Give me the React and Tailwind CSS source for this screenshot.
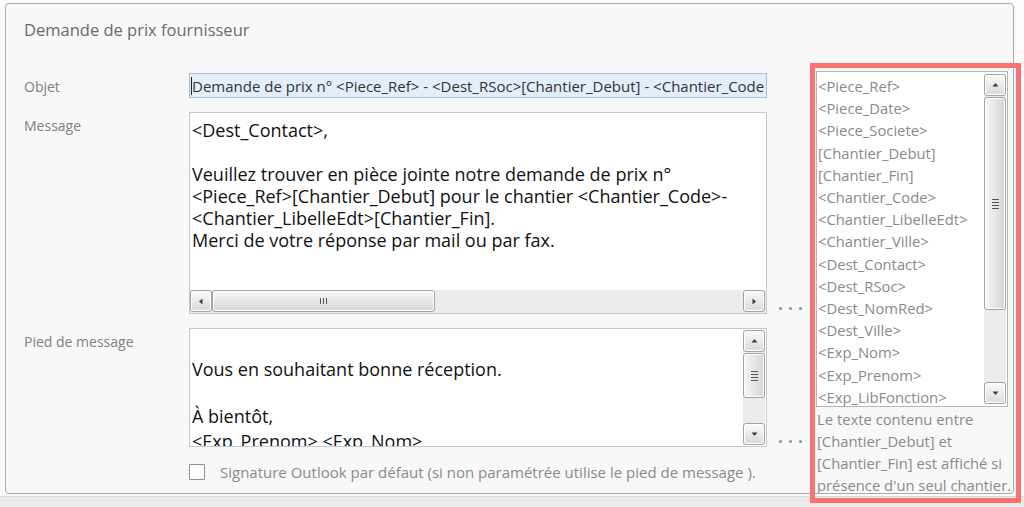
import React from "react";

const FONT = { fontFamily: '"Open Sans", "Noto Sans", sans-serif' };

const items = [
  "<Piece_Ref>",
  "<Piece_Date>",
  "<Piece_Societe>",
  "[Chantier_Debut]",
  "[Chantier_Fin]",
  "<Chantier_Code>",
  "<Chantier_LibelleEdt>",
  "<Chantier_Ville>",
  "<Dest_Contact>",
  "<Dest_RSoc>",
  "<Dest_NomRed>",
  "<Dest_Ville>",
  "<Exp_Nom>",
  "<Exp_Prenom>",
  "<Exp_LibFonction>",
];

function Arrow({ dir }) {
  const paths = {
    up: "M0.5 4.5 L3.5 1 L6.5 4.5 Z",
    down: "M0.5 1.5 L3.5 5 L6.5 1.5 Z",
    left: "M4.5 0.5 L1 3.5 L4.5 6.5 Z",
    right: "M1.5 0.5 L5 3.5 L1.5 6.5 Z",
  };
  return (
    <svg width="7" height="7" viewBox="0 0 7 7">
      <path d={paths[dir]} fill="#3c3c3c" />
    </svg>
  );
}

function Btn({ dir }) {
  return (
    <div className="w-[22px] h-[22px] shrink-0 rounded-[3px] border border-[#a3a3a3] bg-gradient-to-b from-[#fbfbfb] to-[#dadada] flex items-center justify-center shadow-[inset_0_0_0_1px_#ffffff]">
      <Arrow dir={dir} />
    </div>
  );
}

function VGrip() {
  return (
    <div className="flex flex-col gap-[2px]">
      <div className="w-[7px] h-[1px] bg-[#555]" />
      <div className="w-[7px] h-[1px] bg-[#555]" />
      <div className="w-[7px] h-[1px] bg-[#555]" />
      <div className="w-[7px] h-[1px] bg-[#555]" />
    </div>
  );
}

function HGrip() {
  return (
    <div className="flex flex-row gap-[2px]">
      <div className="w-[1px] h-[6px] bg-[#555]" />
      <div className="w-[1px] h-[6px] bg-[#555]" />
      <div className="w-[1px] h-[6px] bg-[#555]" />
    </div>
  );
}

function VScroll({ thumbTop, thumbH }) {
  return (
    <div className="w-[22px] h-full flex flex-col bg-[#ececec]">
      <Btn dir="up" />
      <div className="flex-1 flex flex-col" style={{ paddingTop: thumbTop }}>
        <div
          className="w-[22px] rounded-[3px] border border-[#a3a3a3] bg-gradient-to-r from-[#f7f7f7] to-[#d6d6d6] flex items-center justify-center shadow-[inset_0_0_0_1px_#ffffff]"
          style={{ height: thumbH }}
        >
          <VGrip />
        </div>
      </div>
      <Btn dir="down" />
    </div>
  );
}

function Dots() {
  return (
    <div className="flex gap-[7px] ml-[12px] mb-[4px]">
      <div className="w-[3px] h-[3px] rounded-full bg-[#8793a6]" />
      <div className="w-[3px] h-[3px] rounded-full bg-[#8793a6]" />
      <div className="w-[3px] h-[3px] rounded-full bg-[#8793a6]" />
    </div>
  );
}

export default function App() {
  return (
    <div
      className="relative w-[1024px] h-[507px] bg-[#fbfbfb] overflow-hidden"
      style={FONT}
    >
      <div className="ml-[5px] mt-[3px] w-[1009px] h-[491px] border border-[#a9a9a9] rounded-[4px] bg-[#f8f8f8] flex overflow-hidden">
        {/* Left column */}
        <div className="w-[810px] shrink-0 pl-[18px] flex flex-col">
          <div className="mt-[15px] h-[22px] text-[16.5px] leading-[22px] text-[#6b6b6b]">
            Demande de prix fournisseur
          </div>

          {/* Objet */}
          <div className="mt-[32px] flex">
            <div className="w-[165px] pt-[5px] text-[14px] leading-[18px] text-[#808080]">
              Objet
            </div>
            <div className="w-[578px] h-[25px] border border-[#a9bfd4] bg-[#e2eefa] flex items-center overflow-hidden">
              <div className="w-[1px] h-[18px] bg-[#222] ml-[1px] shrink-0" />
              <div className="whitespace-nowrap overflow-hidden text-[15px] text-[#333] leading-[20px]">
                Demande de prix n° &lt;Piece_Ref&gt; - &lt;Dest_RSoc&gt;[Chantier_Debut] - &lt;Chantier_Code
              </div>
            </div>
          </div>

          {/* Message */}
          <div className="mt-[14px] flex items-end">
            <div className="w-[165px] self-start pt-[5px] text-[14px] leading-[18px] text-[#808080]">
              Message
            </div>
            <div className="w-[578px] h-[202px] border border-[#bccbda] bg-white flex flex-col">
              <div className="flex-1 overflow-hidden pl-[2px] pt-[6px] text-[18px] leading-[22px] text-[#111] whitespace-nowrap">
                <div>&lt;Dest_Contact&gt;,</div>
                <div>&nbsp;</div>
                <div>Veuillez trouver en pièce jointe notre demande de prix n°</div>
                <div>&lt;Piece_Ref&gt;[Chantier_Debut] pour le chantier &lt;Chantier_Code&gt;-</div>
                <div>&lt;Chantier_LibelleEdt&gt;[Chantier_Fin].</div>
                <div>Merci de votre réponse par mail ou par fax.</div>
              </div>
              <div className="h-[23px] flex bg-[#ececec] pr-[1px]">
                <Btn dir="left" />
                <div className="flex-1">
                  <div className="w-[223px] h-[22px] rounded-[3px] border border-[#a3a3a3] bg-gradient-to-b from-[#f7f7f7] to-[#d6d6d6] flex items-center justify-center shadow-[inset_0_0_0_1px_#ffffff]">
                    <HGrip />
                  </div>
                </div>
                <Btn dir="right" />
              </div>
            </div>
            <Dots />
          </div>

          {/* Pied de message */}
          <div className="mt-[14px] flex items-end">
            <div className="w-[165px] self-start pt-[5px] text-[14px] leading-[18px] text-[#808080]">
              Pied de message
            </div>
            <div className="w-[578px] h-[119px] border border-[#bccbda] bg-white flex">
              <div className="flex-1 overflow-hidden pl-[2px] pt-[7px] text-[18px] leading-[22px] text-[#111] whitespace-nowrap">
                <div>&nbsp;</div>
                <div>Vous en souhaitant bonne réception.</div>
                <div className="h-[25px]" />
                <div>À bientôt,</div>
                <div className="mt-[3px]">&lt;Exp_Prenom&gt; &lt;Exp_Nom&gt;</div>
              </div>
              <div className="py-[1px] pr-[1px] h-full">
                <VScroll thumbTop={1} thumbH={45} />
              </div>
            </div>
            <Dots />
          </div>

          {/* Checkbox */}
          <div className="mt-[16px] flex items-center">
            <div className="w-[165px]" />
            <div className="w-[16px] h-[16px] border border-[#8e8e8e] bg-white rounded-[1px]" />
            <div className="ml-[15px] text-[15px] leading-[18px] text-[#8a8a8a] whitespace-nowrap">
              Signature Outlook par défaut (si non paramétrée utilise le pied de message ).
            </div>
          </div>
        </div>

        {/* Right column */}
        <div className="flex-1 flex flex-col overflow-hidden">
          <div className="mt-[67px] w-[192px] h-[336px] border border-[#b5b5b5] bg-white flex">
            <div className="flex-1 pl-[1px] pt-[3px] text-[14.8px] leading-[22.2px] text-[#8a8a8a] whitespace-nowrap overflow-hidden">
              {items.map((it) => (
                <div key={it}>{it}</div>
              ))}
            </div>
            <div className="py-[2px] pr-[1px] h-full">
              <VScroll thumbTop={1} thumbH={213} />
            </div>
          </div>
          <div className="mt-[1px] pl-[1px] text-[14.8px] leading-[22px] text-[#8a8a8a] whitespace-nowrap">
            <div>Le texte contenu entre</div>
            <div>[Chantier_Debut] et</div>
            <div>[Chantier_Fin] est affiché si</div>
            <div>présence d'un seul chantier.</div>
          </div>
        </div>
      </div>

      <div className="mt-[2px] h-[11px] bg-[#ebebeb] border-t border-[#dadada]" />

      {/* Red annotation frame */}
      <div className="absolute left-[810px] top-[63px] w-[211px] h-[440px] border-[5px] border-[#ff7070] pointer-events-none" />
    </div>
  );
}
